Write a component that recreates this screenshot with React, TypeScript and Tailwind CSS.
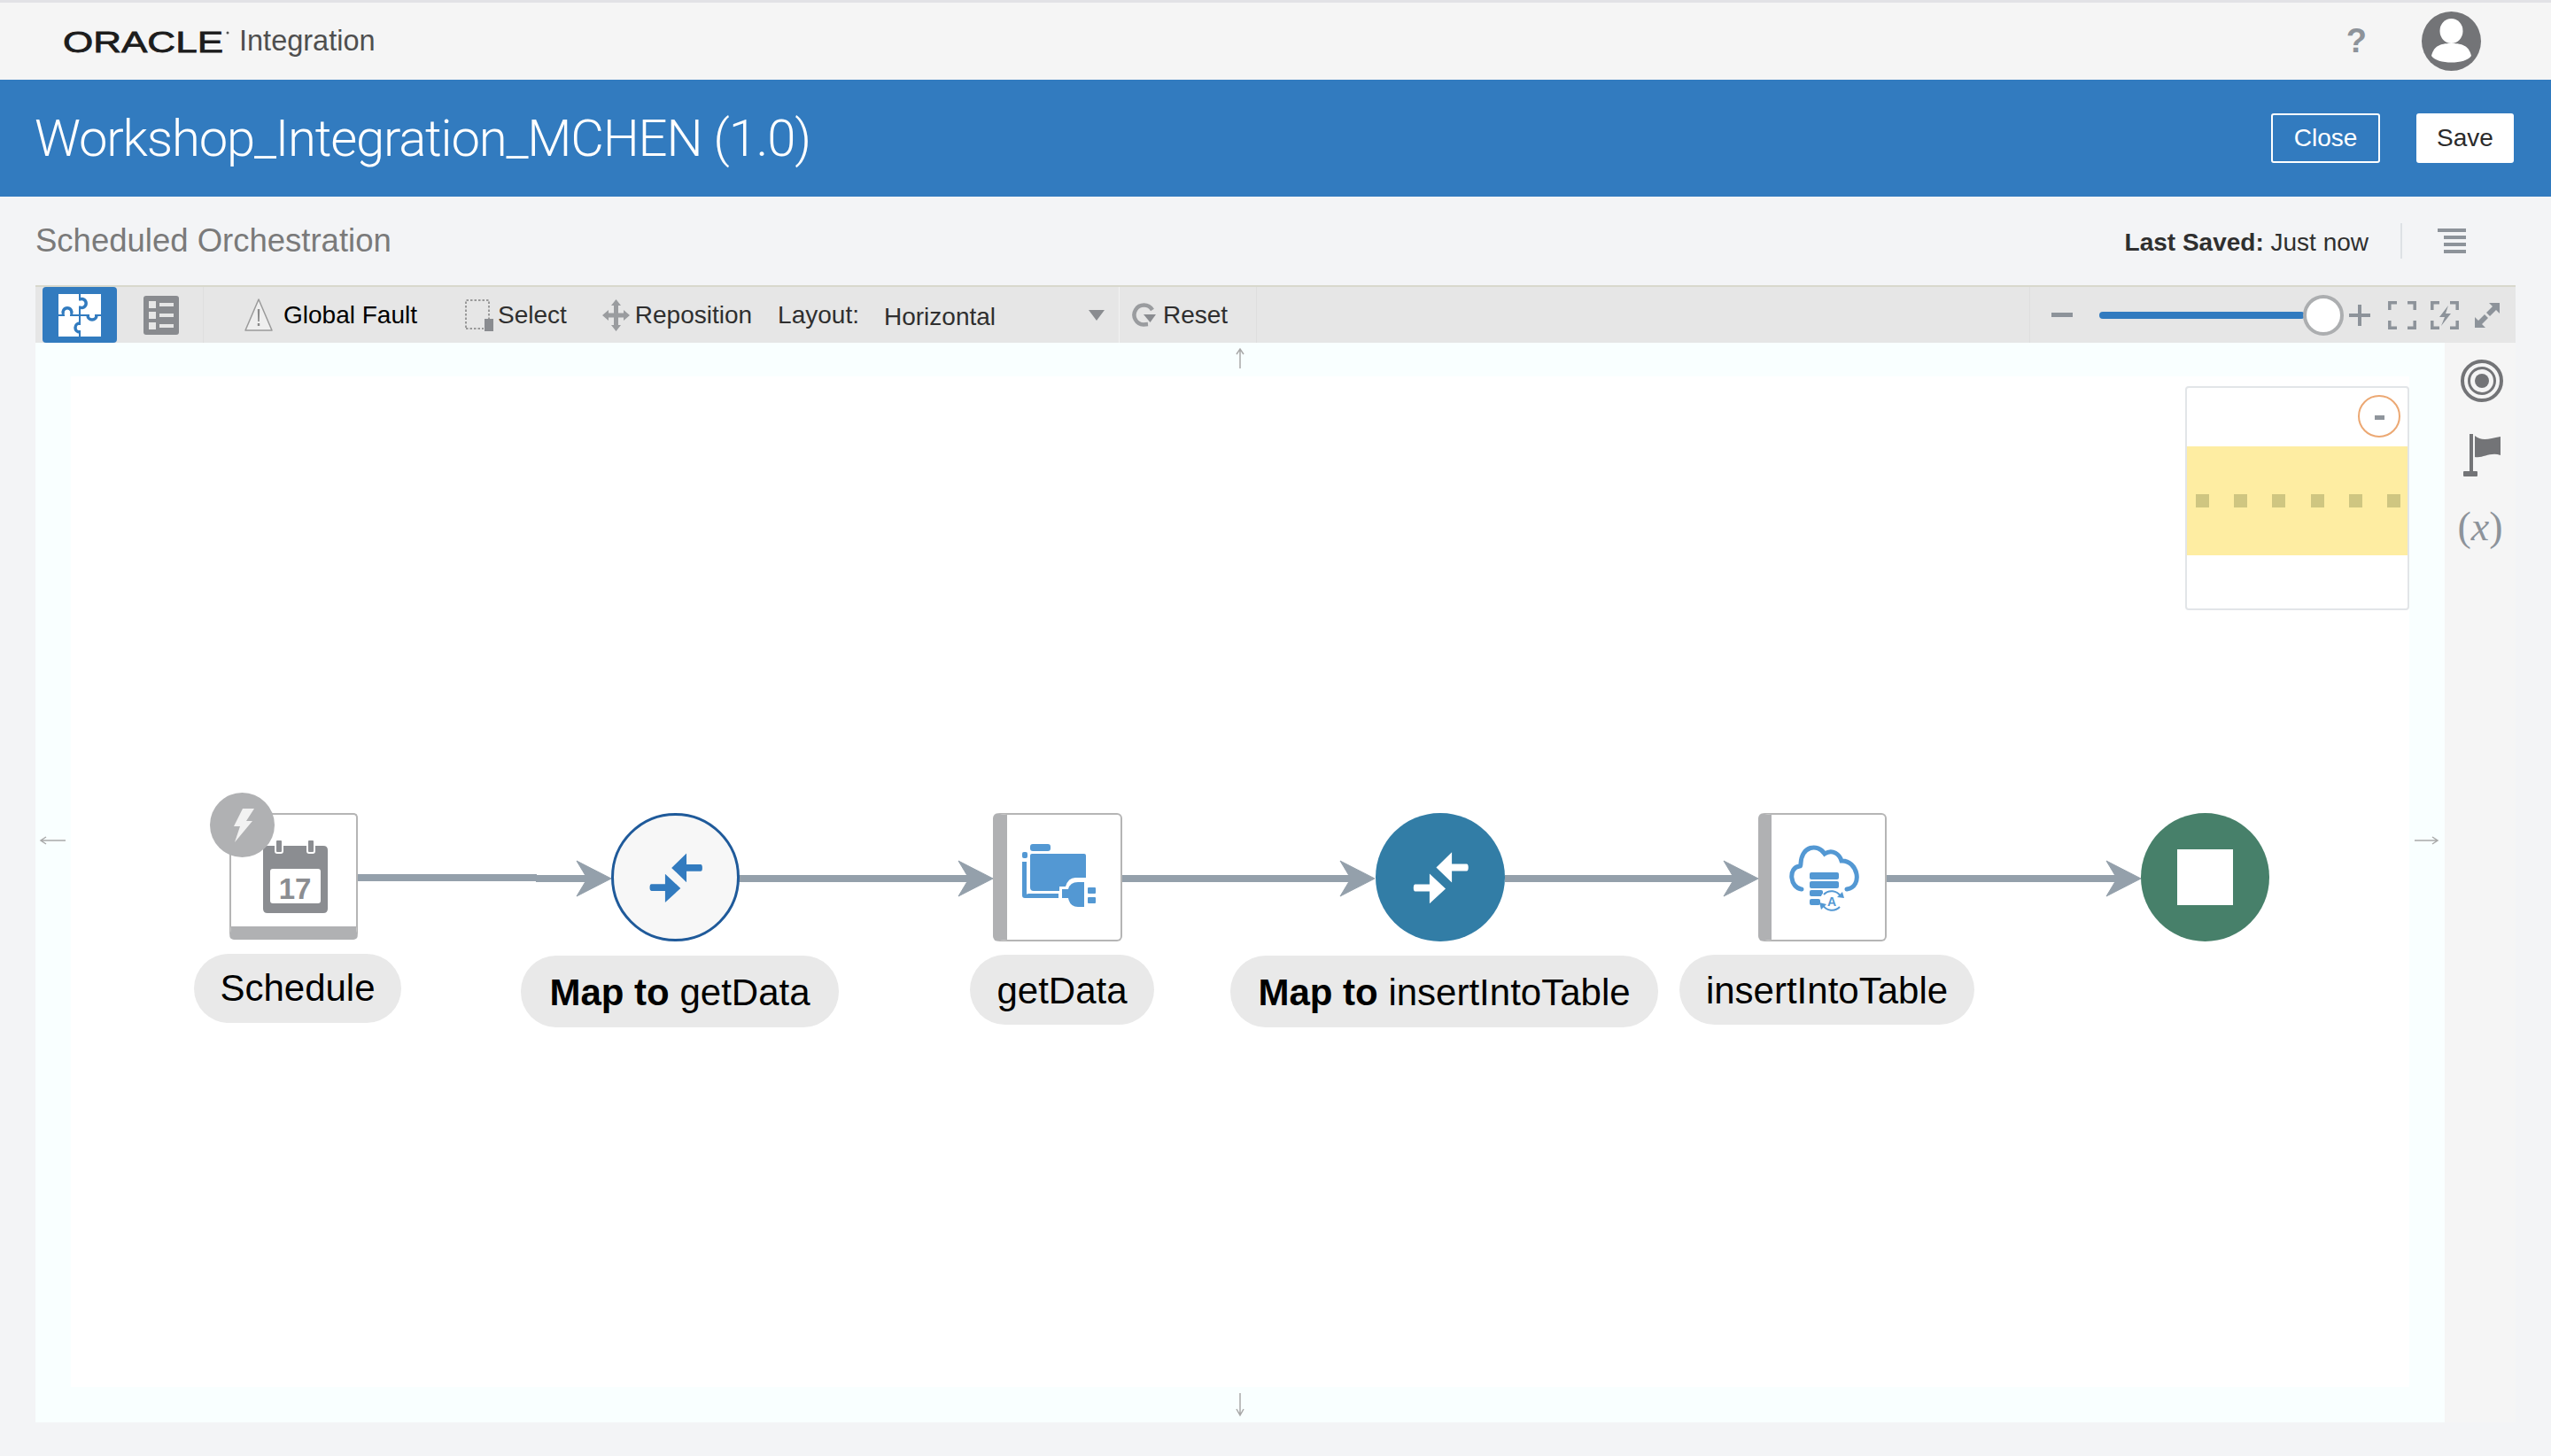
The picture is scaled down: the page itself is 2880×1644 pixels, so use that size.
import React from "react";

// connector segments in page coordinates, arrow tip last
const connectors = [
  { from: 605, to: 656, tip: 690 },
  { from: 834, to: 1087, tip: 1121 },
  { from: 1267, to: 1517, tip: 1552 },
  { from: 1699, to: 1950, tip: 1985 },
  { from: 2130, to: 2382, tip: 2417 },
];

function Connectors() {
  return (
    <svg className="absolute inset-0 w-full h-full" viewBox="40 387 2720 1219">
      <rect x="403" y="987" width="203" height="8" fill="#94a0ab" />
      {connectors.map((c) => (
        <g key={c.tip} fill="#94a0ab">
          <rect x={c.from} y={988} width={c.to - c.from + 12} height={8} />
          <path d={`M${c.tip - 39} 972 L${c.tip} 992 L${c.tip - 39} 1012 L${c.tip - 27} 992 Z`} stroke="#94a0ab" strokeWidth="1" strokeLinejoin="round" />
        </g>
      ))}
      {/* scroll hints */}
      <g fill="none" stroke="#a9a9a9" strokeWidth="1.5">
        <path d="M1400 416 V395 M1396 400 L1400 394 L1404 400" />
        <path d="M1400 1573 V1597 M1396 1591 L1400 1598 L1404 1591" />
        <path d="M46 949 H74 M52 945 L46 949 L52 953" />
        <path d="M2726 949 H2752 M2746 945 L2752 949 L2746 953" />
      </g>
    </svg>
  );
}

function MergeIcon({ color }: { color: string }) {
  return (
    <svg viewBox="0 0 144 144" className="w-full h-full" fill={color}>
      <path d="M67.5 61 L85 44 V57 H101.5 Q103.5 57 103.5 61 Q103.5 65 101.5 65 H85 V78 Z" />
      <path d="M78 85 L60 101.5 V88 H44 Q42 88 42 84 Q42 80 44 80 H60 V68 Z" />
    </svg>
  );
}

function PuzzleIcon() {
  return (
    <svg viewBox="0 0 48 48" className="w-12 h-12">
      <rect width="48" height="48" fill="#fff" />
      <path d="M24 0 V48 M0 24 H48" stroke="#327bbf" strokeWidth="2" fill="none" />
      {/* openings where each knob joins its piece */}
      <g fill="#fff">
        <rect x="22" y="7.5" width="4" height="6" />
        <rect x="7" y="22" width="6" height="4" />
        <rect x="22" y="35" width="4" height="6" />
        <rect x="35" y="22" width="6" height="4" />
      </g>
      <g stroke="#327bbf" strokeWidth="3.5" fill="none">
        <path d="M24 6 A5 5 0 1 1 24 15" />
        <path d="M5.5 23 A5 5 0 1 1 14.5 23" />
        <path d="M24 33 A5 5 0 1 0 24 43" />
        <path d="M33 24 A5 5 0 1 0 43 24" />
      </g>
    </svg>
  );
}

function ListIcon() {
  return (
    <svg viewBox="0 0 40 44" className="w-10 h-11">
      <rect width="40" height="44" rx="3" fill="#898b8f" />
      <g fill="#e6e6e6">
        <rect x="6" y="6" width="8" height="8" />
        <rect x="6" y="18" width="8" height="8" />
        <rect x="6" y="30" width="8" height="8" />
        <rect x="18" y="8" width="16" height="4" />
        <rect x="18" y="20" width="16" height="4" />
        <rect x="18" y="32" width="16" height="4" />
      </g>
    </svg>
  );
}

function WarningIcon() {
  return (
    <svg viewBox="0 0 32 40" className="w-8 h-10">
      <path d="M16 2 L31 37 H1 Z" fill="#efefef" stroke="#9a9a9a" strokeWidth="1.5" strokeLinejoin="round" />
      <path d="M14.8 13 H17.2 L16.8 27 H15.2 Z M14.8 29 H17.2 V32 H14.8 Z" fill="#8a8a8a" />
    </svg>
  );
}

function SelectIcon() {
  return (
    <svg viewBox="0 0 32 36" className="w-8 h-9">
      <path d="M1 32 V1 H27 V24" fill="none" stroke="#999" strokeWidth="2" strokeDasharray="2.5 2" />
      <path d="M1 33 H21" fill="none" stroke="#999" strokeWidth="2" strokeDasharray="2.5 2" />
      <rect x="22" y="22" width="10" height="14" fill="#8a8c90" />
    </svg>
  );
}

function MoveIcon() {
  return (
    <svg viewBox="0 0 31 36" className="w-[31px] h-9" fill="#9a9c9f">
      <path d="M15.5 0 L21 7 H18 V15.5 H24 V12 L31 18 L24 24 V20.5 H18 V29 H21 L15.5 36 L10 29 H13 V20.5 H7 V24 L0 18 L7 12 V15.5 H13 V7 H10 Z" />
    </svg>
  );
}

function ResetIcon() {
  return (
    <svg viewBox="0 0 27 27" className="w-[27px] h-[27px]">
      <path d="M23 8 A11 11 0 1 0 13 24.5 L18 24" fill="none" stroke="#9a9c9f" strokeWidth="4.5" />
      <path d="M13 13 H27 L20.5 22 Z" fill="#8a8c90" />
    </svg>
  );
}

function FitIcon({ bolt }: { bolt?: boolean }) {
  return (
    <svg viewBox="0 0 32 32" className="w-8 h-8" fill="none" stroke="#8d939a" strokeWidth="3.5">
      <path d="M1.8 10 V1.8 H10 M22 1.8 H30.2 V10 M30.2 22 V30.2 H22 M10 30.2 H1.8 V22" />
      {bolt && <path d="M20 5 L10 18 H16 L12 28 L23 14 H17 Z" fill="#8d939a" stroke="none" />}
    </svg>
  );
}

function ExpandIcon() {
  return (
    <svg viewBox="0 0 28 28" className="w-7 h-7" fill="#8d939a">
      <path d="M16 0 H28 V12 L24 8 L17 15 L13 11 L20 4 Z" />
      <path d="M12 28 H0 V16 L4 20 L11 13 L15 17 L8 24 Z" />
    </svg>
  );
}

function CalendarIcon() {
  return (
    <svg viewBox="0 0 73 83" className="w-[73px] h-[83px]">
      <path d="M5 7 H68 Q73 7 73 12 V78 Q73 83 68 83 H5 Q0 83 0 78 V12 Q0 7 5 7 Z" fill="#8b8d91" />
      <rect x="8" y="33" width="57" height="39" rx="3" fill="#fff" />
      <rect x="14" y="0" width="8" height="15" rx="2" fill="#8b8d91" stroke="#fff" strokeWidth="2" />
      <rect x="50" y="0" width="8" height="15" rx="2" fill="#8b8d91" stroke="#fff" strokeWidth="2" />
      <text x="36" y="67" textAnchor="middle" fontSize="33" fontWeight="700" fill="#8b8d91" fontFamily="Liberation Sans, sans-serif">17</text>
    </svg>
  );
}

function FolderPlugIcon() {
  return (
    <svg viewBox="0 0 83 73" className="w-[83px] h-[73px]" fill="#5398d3">
      <rect x="9" y="0" width="23" height="8" rx="3" />
      <rect x="0" y="9" width="6" height="7" rx="2" />
      <path d="M0 20 H5 V57 Q5 56 8 56 H41 V61 H3 Q0 61 0 58 Z" />
      <path d="M11 11 H70 Q72 11 72 13 V38 H60 Q52 38 49 48 H42 V53 H13 Q9 53 9 49 V13 Q9 11 11 11 Z" />
      <path d="M45 56 V51 H52 Q54 43 63 43 H70 V71 H63 Q54 71 52 61 H45 Z" />
      <rect x="74" y="49" width="9" height="7" rx="1" />
      <rect x="74" y="60" width="9" height="7" rx="1" />
    </svg>
  );
}

function CloudDbIcon() {
  return (
    <svg viewBox="0 0 83 76" className="w-[83px] h-[76px]">
      <path d="M15 51 C2 50 -1 26 13 25 C14 25 14 24 14 22 C15 2 33 -1 41 11 C50 5 58 12 60 19 C78 18 85 48 66 51" fill="none" stroke="#5398d3" strokeWidth="5" strokeLinecap="round" />
      <g fill="#5398d3">
        <rect x="24" y="32" width="33" height="8" rx="2" />
        <rect x="24" y="42" width="33" height="8" rx="2" />
        <rect x="24" y="52" width="15" height="7" rx="2" />
        <rect x="24" y="62" width="12" height="7" rx="2" />
      </g>
      <circle cx="49" cy="64" r="13" fill="#fff" />
      <path d="M40 57 A12 12 0 0 1 59 59 M58 71 A12 12 0 0 1 39 69" fill="none" stroke="#5398d3" strokeWidth="2" />
      <path d="M55 60 L63 61 L61 54 Z M43 68 L35 66 L37 74 Z" fill="#5398d3" />
      <text x="49" y="70" textAnchor="middle" fontSize="14" fontWeight="700" fill="#5398d3" fontFamily="Liberation Sans, sans-serif">A</text>
    </svg>
  );
}

function Flag() {
  return (
    <svg viewBox="0 0 42 48" className="w-[42px] h-12" fill="#737477">
      <rect x="7" y="0" width="4" height="42" />
      <rect x="0" y="42" width="16" height="6" rx="1" />
      <path d="M13 2 C20 8 28 6 42 3 V24 C30 20 22 28 13 26 Z" />
    </svg>
  );
}

function Target() {
  return (
    <svg viewBox="0 0 48 48" className="w-12 h-12" fill="none" stroke="#737477">
      <circle cx="24" cy="24" r="22" strokeWidth="4" />
      <circle cx="24" cy="24" r="14.5" strokeWidth="3" />
      <circle cx="24" cy="24" r="8" fill="#737477" strokeWidth="0" />
    </svg>
  );
}

function Pill({ className, children }: { className: string; children: React.ReactNode }) {
  return (
    <div className={`absolute flex items-center justify-center rounded-[40px] bg-[#e9e9e9] text-[42px] text-black ${className}`}>
      {children}
    </div>
  );
}

export default function App() {
  return (
    <div className="w-[2880px] h-[1644px] flex flex-col overflow-hidden bg-[#f3f4f6] font-['Liberation_Sans',sans-serif]">
      <header className="h-[90px] flex items-center border-t-[3px] border-[#e2e2e6] bg-[#f5f5f5] pl-[71px] pr-[79px]">
        <svg viewBox="0 0 189 32" className="w-[189px] h-8 overflow-visible">
          <text x="0" y="28" fontSize="34" fill="#1c1c1c" stroke="#1c1c1c" strokeWidth="0.8" textLength="181" lengthAdjust="spacingAndGlyphs" fontFamily="Liberation Sans, sans-serif">ORACLE</text>
          <circle cx="186" cy="6" r="1.5" fill="#555" />
        </svg>
        <span className="ml-[10px] text-[32.5px] text-[#4f4f4f]">Integration</span>
        <span className="ml-auto text-[38px] font-bold text-[#8d939a]">?</span>
        <div className="ml-[62px] w-[67px] h-[67px] rounded-full bg-[#737477] overflow-hidden">
          <svg viewBox="0 0 67 67" className="w-full h-full" fill="#fff">
            <ellipse cx="33.5" cy="22" rx="13" ry="14" />
            <path d="M11 50 C14 37 24 36 33.5 36 C43 36 53 37 56 50 C50 60 17 60 11 50 Z" />
          </svg>
        </div>
      </header>

      <div className="h-[132px] flex items-center bg-[#327bbf] pl-[39px] pr-[42px]">
        <h1 className="text-[58px] text-white font-light leading-none tracking-[-1.2px] font-['Roboto',sans-serif]">Workshop_Integration_MCHEN (1.0)</h1>
        <button className="ml-auto w-[123px] h-[56px] border-2 border-white rounded-[3px] text-[28px] text-white">Close</button>
        <button className="ml-[41px] w-[110px] h-[56px] bg-white rounded-[3px] text-[28px] text-[#2b2b2b]">Save</button>
      </div>

      <div className="h-[100px] flex items-center pl-10 pr-[96px]">
        <span className="text-[36.5px] text-[#7a7a7a]">Scheduled Orchestration</span>
        <span className="ml-auto pt-[3px] text-[28px] text-[#2f2f2f]"><b>Last Saved:</b> Just now</span>
        <div className="ml-[36px] w-[2px] h-10 bg-[#dde1e5]" />
        <svg viewBox="0 0 32 28" className="ml-[40px] w-8 h-7" fill="#8d939a">
          <rect x="0" y="0" width="32" height="4" />
          <rect x="7" y="8" width="25" height="4" />
          <rect x="7" y="16" width="25" height="4" />
          <rect x="7" y="24" width="25" height="4" />
        </svg>
      </div>

      <div className="ml-10 mr-10 h-[65px] flex items-center border-t-2 border-[#d8d8cc] bg-[#e6e6e6] text-[28px] text-[#2f2f2f]">
        <button className="ml-2 w-[84px] h-[63px] flex items-center justify-center rounded-[4px] bg-[#327bbf]">
          <PuzzleIcon />
        </button>
        <div className="ml-[30px]"><ListIcon /></div>
        <div className="ml-[27px] w-px self-stretch bg-[#dedede]" />
        <div className="ml-[46px]"><WarningIcon /></div>
        <span className="ml-3 text-black">Global Fault</span>
        <div className="ml-[54px]"><SelectIcon /></div>
        <span className="ml-[5px]">Select</span>
        <div className="ml-[40px]"><MoveIcon /></div>
        <span className="ml-[6px]">Reposition</span>
        <span className="ml-[29px]">Layout:</span>
        <span className="ml-[28px] w-[231px] pt-[5px]">Horizontal</span>
        <div className="w-0 h-0 border-x-[9px] border-x-transparent border-t-[12px] border-t-[#8a8c90]" />
        <div className="ml-[16px] w-px self-stretch bg-[#f2f2f2]" />
        <div className="ml-[14px] flex"><ResetIcon /></div>
        <span className="ml-[8px]">Reset</span>
        <div className="ml-[32px] w-px self-stretch bg-[#dedede]" />
        <div className="ml-auto w-px self-stretch bg-[#dedede]" />
        <div className="ml-[24px] w-6 h-[5px] bg-[#8d939a]" />
        <div className="ml-[30px] relative w-[276px] h-[46px] flex items-center">
          <div className="w-[232px] h-2 rounded-full bg-[#327bbf]" />
          <div className="absolute right-0 top-0 w-[46px] h-[46px] rounded-full border-4 border-[#acaeb0] bg-white" />
        </div>
        <svg viewBox="0 0 24 24" className="ml-[6px] w-6 h-6" fill="#8d939a">
          <rect x="0" y="10" width="24" height="4" />
          <rect x="10" y="0" width="4" height="24" />
        </svg>
        <div className="ml-[20px] flex"><FitIcon /></div>
        <div className="ml-[16px] flex"><FitIcon bolt /></div>
        <div className="ml-[18px] flex"><ExpandIcon /></div>
        <div className="ml-[18px]" />
      </div>

      <div className="ml-10 mr-10 h-[1219px] flex">
        <div className="relative w-[2720px] bg-[#f9ffff] px-10 pt-[38px] pb-10">
          <div className="w-full h-full bg-white" />
          <Connectors />

          <div className="absolute left-[2427px] top-[49px] w-[253px] h-[253px] flex flex-col rounded-[4px] border-2 border-[#e2e5e8] bg-white">
            <div className="relative h-[66px]">
              <div className="absolute right-[8px] top-[8px] w-12 h-12 flex items-center justify-center rounded-full border-2 border-[#eca873]">
                <div className="mt-[2px] w-[11px] h-[5px] bg-[#8f959c]" />
              </div>
            </div>
            <div className="h-[123px] flex items-center justify-between pl-[10px] pr-[8px] bg-[#feeda2]">
              {[0, 1, 2, 3, 4, 5].map((i) => (
                <div key={i} className="w-[15px] h-[15px] bg-[#cfc681]" />
              ))}
            </div>
          </div>

          {/* flow nodes */}
          <div className="absolute left-[219px] top-[531px] w-[145px] h-[143px] flex items-center justify-center rounded-[5px] border-2 border-[#b5b5b5] border-b-[15px] border-b-[#b0b1b3] bg-white">
            <div className="mt-[12px] ml-[4px] flex"><CalendarIcon /></div>
            <div className="absolute -left-[24px] -top-[25px] w-[73px] h-[73px] flex items-center justify-center rounded-full bg-[#b0b1b3]">
              <svg viewBox="0 0 26 38" className="w-[26px] h-[38px]" fill="#f2f2f2">
                <path d="M13 0 H26 L17 14 H24 L4 38 L10 20 H3 Z" />
              </svg>
            </div>
          </div>
          <Pill className="left-[179px] top-[690px] w-[234px] h-[78px]"><span className="-mt-[1px]">Schedule</span></Pill>

          <div className="absolute left-[650px] top-[531px] w-[145px] h-[145px] rounded-full border-[3px] border-[#1f5a9a] bg-[#f7f7f7]">
            <MergeIcon color="#327bbf" />
          </div>
          <Pill className="left-[548px] top-[692px] w-[359px] h-[81px]"><span className="pt-[2px]"><b>Map to</b> getData</span></Pill>

          <div className="absolute left-[1081px] top-[531px] w-[146px] h-[145px] flex items-center rounded-[6px] border-2 border-[#b5b5b5] border-l-[16px] border-l-[#b0b1b3] bg-white">
            <div className="ml-[17px] -mt-[2px] flex"><FolderPlugIcon /></div>
          </div>
          <Pill className="left-[1055px] top-[691px] w-[208px] h-[79px]"><span className="pt-[2px]">getData</span></Pill>

          <div className="absolute left-[1513px] top-[531px] w-[146px] h-[145px] rounded-full bg-[#327da6]">
            <MergeIcon color="#fff" />
          </div>
          <Pill className="left-[1349px] top-[692px] w-[483px] h-[81px]"><span className="pt-[2px]"><b>Map to</b> insertIntoTable</span></Pill>

          <div className="absolute left-[1945px] top-[531px] w-[145px] h-[145px] flex items-center rounded-[6px] border-2 border-[#b5b5b5] border-l-[15px] border-l-[#b0b1b3] bg-white">
            <div className="ml-[19px] flex"><CloudDbIcon /></div>
          </div>
          <Pill className="left-[1856px] top-[691px] w-[333px] h-[79px]"><span className="pt-[2px]">insertIntoTable</span></Pill>

          <div className="absolute left-[2377px] top-[531px] w-[145px] h-[145px] flex items-center justify-center rounded-full bg-[#47806a]">
            <div className="w-[63px] h-[63px] bg-white" />
          </div>
        </div>

        <aside className="w-20 flex flex-col items-center bg-[#f5f5f5] pt-[19px]">
          <div className="ml-1 flex"><Target /></div>
          <div className="ml-1 mt-[36px] flex"><Flag /></div>
          <span className="mt-[34px] text-[46px] leading-[46px] text-[#8d939a] font-['Liberation_Serif',serif]">(<span className="italic">x</span>)</span>
        </aside>
      </div>
    </div>
  );
}
